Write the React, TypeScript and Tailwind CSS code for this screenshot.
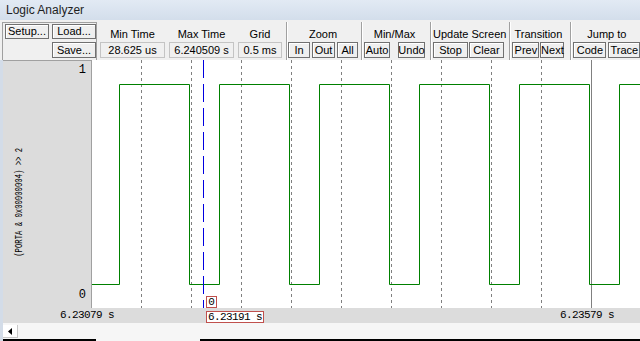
import type { ReactNode } from 'react';

const sans = { fontFamily: '"Liberation Sans", Arial, sans-serif' };
const mono = { fontFamily: '"Liberation Mono", "Courier New", monospace' };

const Btn = ({ className, children }: { className: string; children: ReactNode }) => (
    <div
        className={`flex items-center justify-center border border-[#707070] bg-[#efefef] text-[11px] leading-none text-black shadow-[inset_1px_1px_0_#ffffff] ${className}`}
    >
        {children}
    </div>
);

const ValueBox = ({ className, children }: { className: string; children: ReactNode }) => (
    <div
        className={`flex h-[16px] items-center justify-center border border-[#c4c4c4] bg-[#f0f0f0] text-[11px] leading-none text-black ${className}`}
    >
        {children}
    </div>
);

const Label = ({ children }: { children: ReactNode }) => (
    <div className="h-[14px] whitespace-nowrap text-center text-[11px] leading-[14px] text-black">{children}</div>
);

const Sep = ({ className }: { className: string }) => (
    <div className={`mt-[2px] flex h-[38px] ${className}`}>
        <div className="w-px bg-[#a0a0a0]" />
        <div className="w-px bg-white" />
    </div>
);

const edges = [27, 97, 127, 197, 227, 297, 327, 397, 427, 497, 527];
const HIGH = 24.5;
const LOW = 224.5;

const signalPath = () => {
    let d = `M0 ${LOW}`;
    let y = LOW;
    edges.forEach((x) => {
        d += ` H${x + 0.5}`;
        y = y === LOW ? HIGH : LOW;
        d += ` V${y}`;
    });
    return d + ' H548';
};

const grid = [49, 99, 149, 199, 249, 299, 349, 399, 449];

export default function App() {
    return (
        <div className="h-[341px] w-[640px] overflow-hidden bg-[#f0f0f0]" style={sans}>
            {/* title */}
            <div className="flex h-[20px] items-center bg-gradient-to-b from-[#e2eaf4] to-[#d3deeb] pl-[6px] text-[12px] text-[#1e1e1e]">
                Logic Analyzer
            </div>

            {/* toolbar */}
            <div className="flex h-[40px] bg-[#f0f0f0]">
                <div className="ml-[2px] mt-[2px] flex h-[38px] w-[98px] flex-col gap-[3px] border-l border-r border-t border-[#a0a0a0] pl-[2px] pt-[1px]">
                    <div className="flex gap-[3px]">
                        <Btn className="h-[15px] w-[44px]">Setup...</Btn>
                        <Btn className="h-[15px] w-[44px]">Load...</Btn>
                    </div>
                    <div className="flex pl-[47px]">
                        <Btn className="h-[16px] w-[44px]">Save...</Btn>
                    </div>
                </div>

                <div className="ml-[3px] flex w-[65px] flex-col pt-[7px]">
                    <Label>Min Time</Label>
                    <ValueBox className="mt-px w-[65px]">28.625 us</ValueBox>
                </div>
                <div className="ml-[4px] flex w-[65px] flex-col pt-[7px]">
                    <Label>Max Time</Label>
                    <ValueBox className="mt-px w-[65px]">6.240509 s</ValueBox>
                </div>
                <div className="ml-[4px] flex w-[44px] flex-col pt-[7px]">
                    <Label>Grid</Label>
                    <ValueBox className="mt-px w-[44px]">0.5 ms</ValueBox>
                </div>
                <Sep className="ml-[4px]" />

                <div className="flex flex-col pt-[7px]">
                    <Label>Zoom</Label>
                    <div className="mt-px flex gap-[2px]">
                        <Btn className="h-[16px] w-[22px]">In</Btn>
                        <Btn className="h-[16px] w-[23px]">Out</Btn>
                        <Btn className="h-[16px] w-[21px]">All</Btn>
                    </div>
                </div>
                <Sep className="ml-[3px]" />

                <div className="ml-px flex flex-col pt-[7px]">
                    <Label>Min/Max</Label>
                    <div className="mt-px flex gap-[8px]">
                        <Btn className="h-[16px] w-[26px]">Auto</Btn>
                        <Btn className="h-[16px] w-[27px]">Undo</Btn>
                    </div>
                </div>
                <Sep className="ml-[5px]" />

                <div className="ml-px flex flex-col pt-[7px]">
                    <Label>Update Screen</Label>
                    <div className="mt-px flex gap-px">
                        <Btn className="h-[16px] w-[35px]">Stop</Btn>
                        <Btn className="h-[16px] w-[35px]">Clear</Btn>
                    </div>
                </div>
                <Sep className="ml-[3px]" />

                <div className="ml-px flex flex-col pt-[7px]">
                    <Label>Transition</Label>
                    <div className="mt-px flex gap-px">
                        <Btn className="h-[16px] w-[27px]">Prev</Btn>
                        <Btn className="h-[16px] w-[24px]">Next</Btn>
                    </div>
                </div>
                <Sep className="ml-[6px]" />

                <div className="ml-px flex flex-col pt-[7px]">
                    <Label>Jump to</Label>
                    <div className="mt-px flex gap-[2px]">
                        <Btn className="h-[16px] w-[33px]">Code</Btn>
                        <Btn className="h-[16px] w-[32px]">Trace</Btn>
                    </div>
                </div>
            </div>

            {/* chart + bottom */}
            <div className="flex h-[281px]">
                <div className="w-[3px] bg-[#d3dce8]" />
                <div className="flex flex-1 flex-col">
                    <div className="flex h-[248px]">
                        <div className="flex w-[89px] border-r border-t border-[#a0a0a0] bg-[#dcdcdc]">
                            <div className="ml-[10px] pt-[58px]">
                                <div
                                    className="h-[166px] rotate-180 scale-y-[0.66] whitespace-nowrap text-[11px] leading-[12px] text-black [writing-mode:vertical-rl]"
                                    style={mono}
                                >
                                    (PORTA &amp; 0x00000004) &gt;&gt; 2
                                </div>
                            </div>
                            <div
                                className="ml-auto flex flex-col justify-between pb-[6px] pr-[5px] pt-[3px] text-[12px] leading-[13px] text-black"
                                style={mono}
                            >
                                <span>1</span>
                                <span>0</span>
                            </div>
                        </div>
                        <div className="relative flex-1 bg-white">
                            <svg width="548" height="248" className="block">
                                {grid.map((x) => (
                                    <line
                                        key={x}
                                        x1={x + 0.5}
                                        x2={x + 0.5}
                                        y1="0"
                                        y2="248"
                                        stroke="#808080"
                                        strokeDasharray="3 3"
                                    />
                                ))}
                                <line x1="499.5" x2="499.5" y1="0" y2="248" stroke="#808080" />
                                <path d={signalPath()} fill="none" stroke="#008000" strokeWidth="1" />
                                <line
                                    x1="111.5"
                                    x2="111.5"
                                    y1="0"
                                    y2="248"
                                    stroke="#0000e0"
                                    strokeDasharray="18 6"
                                />
                            </svg>
                            <div
                                className="absolute left-[114px] top-[236px] flex h-[12px] w-[11px] items-center justify-center border border-[#c0504d] bg-white text-[11px] leading-none text-black"
                                style={mono}
                            >
                                0
                            </div>
                        </div>
                    </div>

                    <div
                        className="relative h-[15px] whitespace-nowrap bg-[#dcdcdc] text-[11px] leading-[15px] tracking-[-0.6px] text-black"
                        style={mono}
                    >
                        <span className="absolute left-[57px] top-0">6.23079 s</span>
                        <span className="absolute left-[557px] top-0">6.23579 s</span>
                        <div className="absolute left-[203px] top-[3px] flex h-[12px] w-[58px] items-center border border-[#c0504d] bg-white pl-px leading-none">
                            6.23191 s
                        </div>
                    </div>

                    <div className="flex h-[18px] flex-col bg-[#f6f6f6]">
                        <div className="flex h-[16px] items-start pt-[2px]">
                            <div className="flex h-[13px] w-[15px] items-center justify-center border-b border-r border-[#c8c8c8] bg-white">
                                <svg width="4" height="7" viewBox="0 0 4 7">
                                    <path d="M4 0 L0 3.5 L4 7 Z" fill="#000" />
                                </svg>
                            </div>
                        </div>
                        <div className="flex h-[2px]">
                            <div className="w-[93px] bg-black" />
                            <div className="w-[104px]" />
                            <div className="flex-1 bg-black" />
                        </div>
                    </div>
                </div>
            </div>
        </div>
    );
}
